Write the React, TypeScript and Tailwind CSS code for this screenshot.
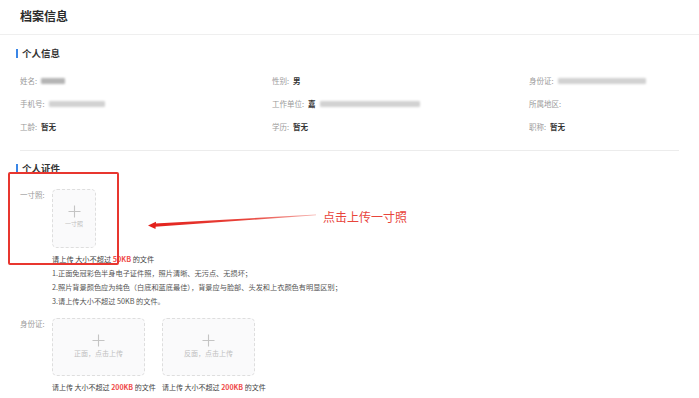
const labelCls = "text-[#9a9a9a]";
const valueCls = "ml-[4px] font-semibold text-[#333]";

function Blur({ w, dark }: { w: number; dark?: boolean }) {
  return (
    <span
      className={`ml-[4px] inline-block h-[6px] rounded-[1px] blur-[1px] ${dark ? "bg-[#b5b5b5]" : "bg-[#d2d2d2]"}`}
      style={{ width: w }}
    />
  );
}

function Field({ label, children }: { label: string; children?: React.ReactNode }) {
  return (
    <div className="flex h-[23px] items-center">
      <span className={labelCls}>{label}:</span>
      {children}
    </div>
  );
}

function SectionTitle({ title }: { title: string }) {
  return (
    <div className="flex h-[12px] items-center pl-4">
      <span className="h-[9px] w-[2px] bg-[#3a86e6]" />
      <span className="ml-[4px] text-[9.5px] font-bold text-[#333]">{title}</span>
    </div>
  );
}

function UploadBox({ w, h, text, textSize }: { w: string; h: string; text: string; textSize: string }) {
  return (
    <div
      className={`${w} ${h} flex flex-col items-center justify-center rounded-[5px] border border-dashed border-[#dedede] bg-[#fafafb]`}
    >
      <svg width="13" height="13" viewBox="0 0 13 13" className="-mt-[3px]">
        <path d="M6.5 0.5v12M0.5 6.5h12" stroke="#c4c4c4" strokeWidth="1.1" />
      </svg>
      <span className={`${textSize} mt-[1px] leading-[10px] text-[#c0c0c0]`}>{text}</span>
    </div>
  );
}

function Tip({ size }: { size: string }) {
  return (
    <span className="text-[#444]">
      请上传 大小不超过 <b className="text-[#ef4b4b]">{size}</b> 的文件
    </span>
  );
}

export default function App() {
  return (
    <div className="relative h-[398px] w-[699px] overflow-hidden bg-white font-['Noto_Sans_CJK_SC','Noto_Sans',sans-serif]">
      {/* HEADER */}
      <div className="flex h-[35px] items-center border-b border-[#efefef] px-5 pb-[3px]">
        <h1 className="text-[12px] font-bold text-[#2b2b2b]">档案信息</h1>
      </div>

      {/* 个人信息 */}
      <div className="mt-[12px]">
        <SectionTitle title="个人信息" />
        <div className="mt-[10px] grid grid-cols-[252px_257px_1fr] pl-5 text-[7.5px] leading-[10px]">
          <Field label="姓名">
            <Blur w={24} dark />
          </Field>
          <Field label="性别">
            <span className={valueCls}>男</span>
          </Field>
          <Field label="身份证">
            <Blur w={88} />
          </Field>
          <Field label="手机号">
            <Blur w={56} />
          </Field>
          <Field label="工作单位">
            <span className={valueCls}>嘉</span>
            <Blur w={100} />
          </Field>
          <Field label="所属地区" />
          <Field label="工龄">
            <span className={valueCls}>暂无</span>
          </Field>
          <Field label="学历">
            <span className={valueCls}>暂无</span>
          </Field>
          <Field label="职称">
            <span className={valueCls}>暂无</span>
          </Field>
        </div>
      </div>

      <div className="mx-5 mt-[12px] border-t border-[#ececec]" />

      {/* 个人证件 */}
      <div className="mt-[11px]">
        <SectionTitle title="个人证件" />

        <div className="mt-[15px] flex pl-5 text-[7.5px] leading-[10px]">
          <span className="mt-[1px] w-[32px] text-[#9a9a9a]">一寸照:</span>
          <div>
            <UploadBox w="w-[44px]" h="h-[59px]" text="一寸照" textSize="text-[6px]" />
            <div className="mt-[4px] whitespace-nowrap text-[7.2px] leading-[14px] text-[#555]">
              <div>
                <Tip size="50KB" />
              </div>
              <div>1.正面免冠彩色半身电子证件照，照片清晰、无污点、无损坏；</div>
              <div>2.照片背景颜色应为纯色（白底和蓝底最佳），背景应与脸部、头发和上衣颜色有明显区别；</div>
              <div>3.请上传大小不超过 50KB 的文件。</div>
            </div>
          </div>
        </div>

        <div className="mt-[10px] flex pl-5 text-[7.5px] leading-[10px]">
          <span className="mt-[1px] w-[32px] text-[#9a9a9a]">身份证:</span>
          <div className="flex gap-[17px]">
            <div className="w-[93px]">
              <UploadBox w="w-[93px]" h="h-[58px]" text="正面，点击上传" textSize="text-[7px]" />
              <div className="mt-[6px] whitespace-nowrap text-[7px]">
                <Tip size="200KB" />
              </div>
            </div>
            <div className="w-[93px]">
              <UploadBox w="w-[93px]" h="h-[58px]" text="反面，点击上传" textSize="text-[7px]" />
              <div className="mt-[6px] whitespace-nowrap text-[7px]">
                <Tip size="200KB" />
              </div>
            </div>
          </div>
        </div>
      </div>

      {/* annotation */}
      <div className="pointer-events-none absolute left-[8px] top-[172px] h-[93px] w-[111px] rounded-[2px] border-2 border-[#e8362f]" />
      <svg className="pointer-events-none absolute left-0 top-0" width="699" height="398">
        <defs>
          <linearGradient id="fade" x1="149" y1="0" x2="316" y2="0" gradientUnits="userSpaceOnUse">
            <stop offset="0" stopColor="#e3201b" />
            <stop offset="0.6" stopColor="#e8453c" />
            <stop offset="1" stopColor="#f6b4b0" />
          </linearGradient>
        </defs>
        <polygon points="155,223.6 316,214.6 316,215.2 155,226.8" fill="url(#fade)" />
        <polygon points="148,225.6 156,221.8 155.5,229" fill="#e3201b" />
      </svg>
      <span className="absolute left-[323px] top-[209px] text-[12px] leading-[16px] text-[#e8453c]">
        点击上传一寸照
      </span>
    </div>
  );
}
